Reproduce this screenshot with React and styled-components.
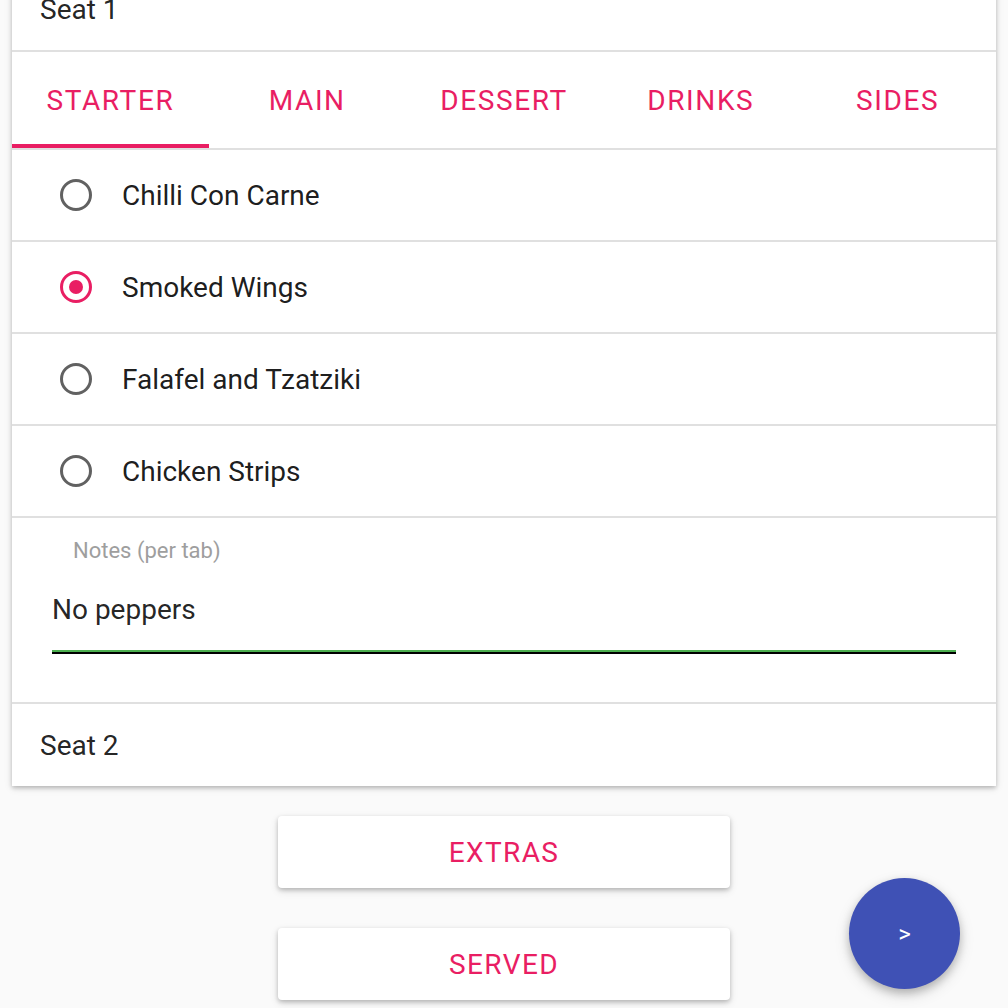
import { useState } from "react";
import styled, { createGlobalStyle } from "styled-components";

const GlobalStyle = createGlobalStyle`
    html, body {
        margin: 0;
        padding: 0;
        background: #fafafa;
        font-family: Roboto, "Liberation Sans", sans-serif;
        overflow: hidden;
    }
`;

const PINK = "#e91e63";
const DIVIDER = "2px solid #e0e0e0";

const Page = styled.div`
    position: relative;
    display: flex;
    flex-direction: column;
    width: 1008px;
    height: 1008px;
    padding: 0 12px;
    box-sizing: border-box;
`;

const Card = styled.section`
    margin-top: -32px;
    background: #fff;
    box-shadow: 0 2px 4px rgba(0, 0, 0, 0.2), 0 2px 8px rgba(0, 0, 0, 0.12);
`;

const SeatHeader = styled.div`
    height: 82px;
    display: flex;
    align-items: center;
    padding-left: 28px;
    font-size: 28px;
    color: rgba(0, 0, 0, 0.87);
    border-bottom: ${(p) => (p.$last ? "none" : DIVIDER)};
`;

const Tabs = styled.div`
    display: grid;
    grid-template-columns: repeat(5, 1fr);
    height: 96px;
    border-bottom: ${DIVIDER};
`;

const Tab = styled.button`
    position: relative;
    border: none;
    background: none;
    padding: 0;
    font-family: inherit;
    font-size: 28px;
    letter-spacing: 1.6px;
    text-transform: uppercase;
    color: ${PINK};
    cursor: pointer;

    &::after {
        content: "";
        position: absolute;
        left: 0;
        right: 0;
        bottom: 0;
        height: 4px;
        background: ${(p) => (p.$active ? PINK : "transparent")};
    }
`;

const OptionRow = styled.label`
    display: flex;
    align-items: center;
    height: 90px;
    padding-left: 48px;
    gap: 30px;
    border-bottom: ${DIVIDER};
    font-size: 28px;
    color: rgba(0, 0, 0, 0.9);
    cursor: pointer;
`;

const Radio = styled.span`
    width: 32px;
    height: 32px;
    box-sizing: border-box;
    border-radius: 50%;
    border: 3px solid ${(p) => (p.$checked ? PINK : "#616161")};
    display: flex;
    align-items: center;
    justify-content: center;

    &::after {
        content: "";
        width: 14px;
        height: 14px;
        border-radius: 50%;
        background: ${(p) => (p.$checked ? PINK : "transparent")};
    }
`;

const NotesField = styled.div`
    display: flex;
    flex-direction: column;
    height: 186px;
    padding: 20px 40px 0 40px;
    box-sizing: border-box;
    border-bottom: ${DIVIDER};
`;

const NotesLabel = styled.span`
    font-size: 22px;
    line-height: 26px;
    color: #9e9e9e;
    padding-left: 21px;
`;

const NotesInput = styled.input`
    margin-top: 28px;
    border: none;
    outline: none;
    background: none;
    padding: 0;
    font-family: inherit;
    font-size: 28px;
    color: rgba(0, 0, 0, 0.87);
    height: 34px;
`;

const Underline = styled.div`
    margin-top: 24px;
    height: 2px;
    background: #000;
    border-top: 2px solid #4caf50;
`;

const Actions = styled.div`
    display: flex;
    flex-direction: column;
    align-items: center;
    gap: 40px;
    margin-top: 30px;
`;

const RaisedButton = styled.button`
    width: 452px;
    height: 72px;
    border: none;
    border-radius: 4px;
    background: #fff;
    box-shadow: 0 2px 4px rgba(0, 0, 0, 0.2), 0 3px 8px rgba(0, 0, 0, 0.12);
    font-family: inherit;
    font-size: 28px;
    letter-spacing: 1.4px;
    text-transform: uppercase;
    color: ${PINK};
    cursor: pointer;
`;

const Fab = styled.button`
    position: absolute;
    right: 48px;
    bottom: 19px;
    width: 111px;
    height: 111px;
    border: none;
    border-radius: 50%;
    background: #3f51b5;
    color: #fff;
    font-family: inherit;
    font-size: 24px;
    padding-top: 2px;
    box-shadow: 0 4px 8px rgba(0, 0, 0, 0.22), 0 6px 16px rgba(0, 0, 0, 0.12);
    cursor: pointer;
`;

const tabs = ["Starter", "Main", "Dessert", "Drinks", "Sides"];
const starters = ["Chilli Con Carne", "Smoked Wings", "Falafel and Tzatziki", "Chicken Strips"];

const App = () => {
    const [tab, setTab] = useState(0);
    const [choice, setChoice] = useState(1);
    const [notes, setNotes] = useState("No peppers");

    return (
        <Page>
            <GlobalStyle />
            <Card>
                <SeatHeader>Seat 1</SeatHeader>
                <Tabs>
                    {tabs.map((t, i) => (
                        <Tab key={t} $active={i === tab} onClick={() => setTab(i)}>{t}</Tab>
                    ))}
                </Tabs>
                {starters.map((s, i) => (
                    <OptionRow key={s} onClick={() => setChoice(i)}>
                        <Radio $checked={i === choice} />
                        <span>{s}</span>
                    </OptionRow>
                ))}
                <NotesField>
                    <NotesLabel>Notes (per tab)</NotesLabel>
                    <NotesInput value={notes} onChange={(e) => setNotes(e.target.value)} />
                    <Underline />
                </NotesField>
                <SeatHeader $last>Seat 2</SeatHeader>
            </Card>
            <Actions>
                <RaisedButton>Extras</RaisedButton>
                <RaisedButton>Served</RaisedButton>
            </Actions>
            <Fab>&gt;</Fab>
        </Page>
    );
};

export default App;
